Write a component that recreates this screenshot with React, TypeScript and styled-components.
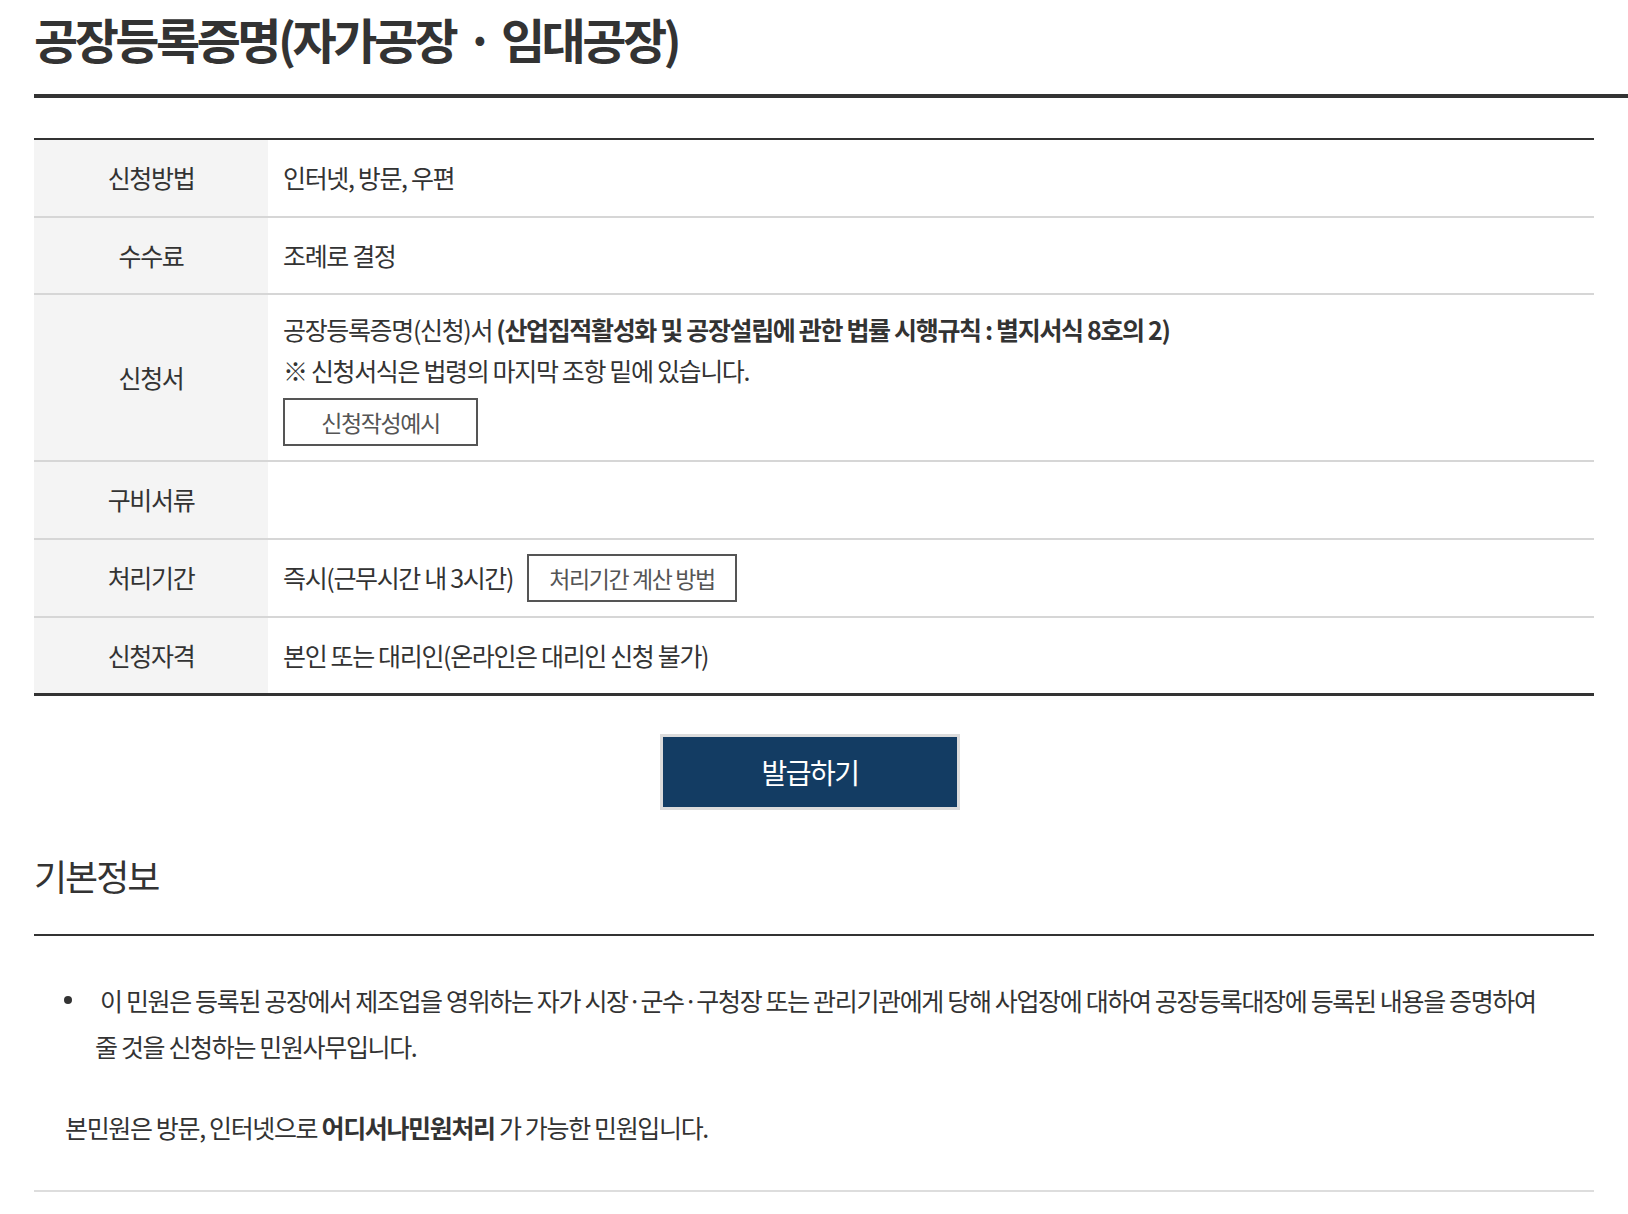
import styled, { createGlobalStyle } from "styled-components";

const GlobalStyle = createGlobalStyle`
    body {
        margin: 0;
        background: #fff;
        color: #333;
        font-family: "Noto Sans CJK KR", "Noto Sans", sans-serif;
    }
`;

const infoRows = [
    { label: "신청방법", key: "method" },
    { label: "수수료", key: "fee" },
    { label: "신청서", key: "form" },
    { label: "구비서류", key: "docs" },
    { label: "처리기간", key: "period" },
    { label: "신청자격", key: "qualify" },
];

function renderCell(key: string) {
    switch (key) {
        case "method":
            return <Line>인터넷, 방문, 우편</Line>;
        case "fee":
            return <Line>조례로 결정</Line>;
        case "form":
            return (
                <>
                    <FormLine>
                        공장등록증명(신청)서 <b>(산업집적활성화 및 공장설립에 관한 법률 시행규칙 : 별지서식 8호의 2)</b>
                    </FormLine>
                    <FormLine>※ 신청서식은 법령의 마지막 조항 밑에 있습니다.</FormLine>
                    <OutlineButton $width={195} $top={8}>신청작성예시</OutlineButton>
                </>
            );
        case "period":
            return (
                <Inline>
                    <Line>즉시(근무시간 내 3시간)</Line>
                    <OutlineButton $width={210}>처리기간 계산 방법</OutlineButton>
                </Inline>
            );
        case "qualify":
            return <Line>본인 또는 대리인(온라인은 대리인 신청 불가)</Line>;
        default:
            return null;
    }
}

function App() {
    return (
        <Page>
            <GlobalStyle />
            <PageTitle>공장등록증명(자가공장 · 임대공장)</PageTitle>

            <InfoTable>
                <tbody>
                    {infoRows.map((row) => (
                        <tr key={row.key}>
                            <Th>{row.label}</Th>
                            <Td>{renderCell(row.key)}</Td>
                        </tr>
                    ))}
                </tbody>
            </InfoTable>

            <IssueArea>
                <IssueButton>발급하기</IssueButton>
            </IssueArea>

            <SectionTitle>기본정보</SectionTitle>

            <BulletList>
                <li>
                    이 민원은 등록된 공장에서 제조업을 영위하는 자가 시장·군수·구청장 또는 관리기관에게 당해 사업장에 대하여 공장등록대장에 등록된 내용을 증명하여 줄 것을 신청하는 민원사무입니다.
                </li>
            </BulletList>

            <Notice>
                본민원은 방문, 인터넷으로 <b>어디서나민원처리</b> 가 가능한 민원입니다.
            </Notice>
        </Page>
    );
}

const Page = styled.div`
    padding: 0 34px;
    width: 1560px;
    box-sizing: content-box;
    overflow: hidden;
`;

const PageTitle = styled.h1`
    margin: 0 -34px 40px 0;
    padding: 8px 0 26px;
    font-size: 48px;
    line-height: 60px;
    font-weight: 700;
    letter-spacing: -3.5px;
    word-spacing: 3px;
    color: #333;
    border-bottom: 4px solid #333;
`;

const InfoTable = styled.table`
    width: 100%;
    border-collapse: collapse;
    border-top: 2px solid #333;
    border-bottom: 3px solid #333;
    font-size: 25px;
    letter-spacing: -1.35px;
`;

const Th = styled.th`
    width: 214px;
    padding: 14px 10px;
    background: #f4f4f4;
    font-weight: 400;
    text-align: center;
    color: #333;
    border-bottom: 2px solid #d6d6d6;
    line-height: 47.5px;
`;

const Td = styled.td`
    padding: 14px 15px;
    vertical-align: middle;
    border-bottom: 2px solid #d6d6d6;
    color: #333;
`;

const Line = styled.div`
    line-height: 47.5px;
`;

const FormLine = styled.div`
    line-height: 40.5px;

    b {
        font-weight: 700;
    }
`;

const Inline = styled.div`
    display: flex;
    align-items: center;
    gap: 14px;
`;

const OutlineButton = styled.button<{ $width: number; $top?: number }>`
    display: block;
    width: ${({ $width }) => $width}px;
    height: 48px;
    margin-top: ${({ $top }) => $top ?? 0}px;
    border: 2px solid #555;
    background: #fff;
    color: #555;
    font-family: inherit;
    font-size: 23px;
    letter-spacing: -1.4px;
    cursor: pointer;
`;

const IssueArea = styled.div`
    display: flex;
    justify-content: center;
    padding: 38px 8px 0 0;
`;

const IssueButton = styled.button`
    width: 300px;
    height: 76px;
    border: 3px solid #dcdcdc;
    background: #133c63;
    color: #fff;
    font-family: inherit;
    font-size: 28px;
    letter-spacing: -1.5px;
    cursor: pointer;
`;

const SectionTitle = styled.h2`
    margin: 40px 0 0;
    padding-bottom: 34px;
    font-size: 36px;
    line-height: 50px;
    font-weight: 400;
    letter-spacing: -2px;
    color: #333;
    border-bottom: 2px solid #333;
`;

const BulletList = styled.ul`
    list-style: none;
    margin: 41px 40px 0 0;
    padding: 0;
    font-size: 25px;
    letter-spacing: -1.35px;
    line-height: 46px;

    li {
        position: relative;
        padding-left: 61px;
        text-indent: 5px;
    }

    li::before {
        content: "";
        position: absolute;
        left: 30px;
        top: 19px;
        width: 8px;
        height: 8px;
        border-radius: 50%;
        background: #333;
    }
`;

const Notice = styled.p`
    margin: 35px 0 0;
    padding: 0 0 40px 31px;
    font-size: 25px;
    letter-spacing: -1.35px;
    line-height: 46px;
    border-bottom: 2px solid #ddd;

    b {
        font-weight: 700;
    }
`;

export default App;
